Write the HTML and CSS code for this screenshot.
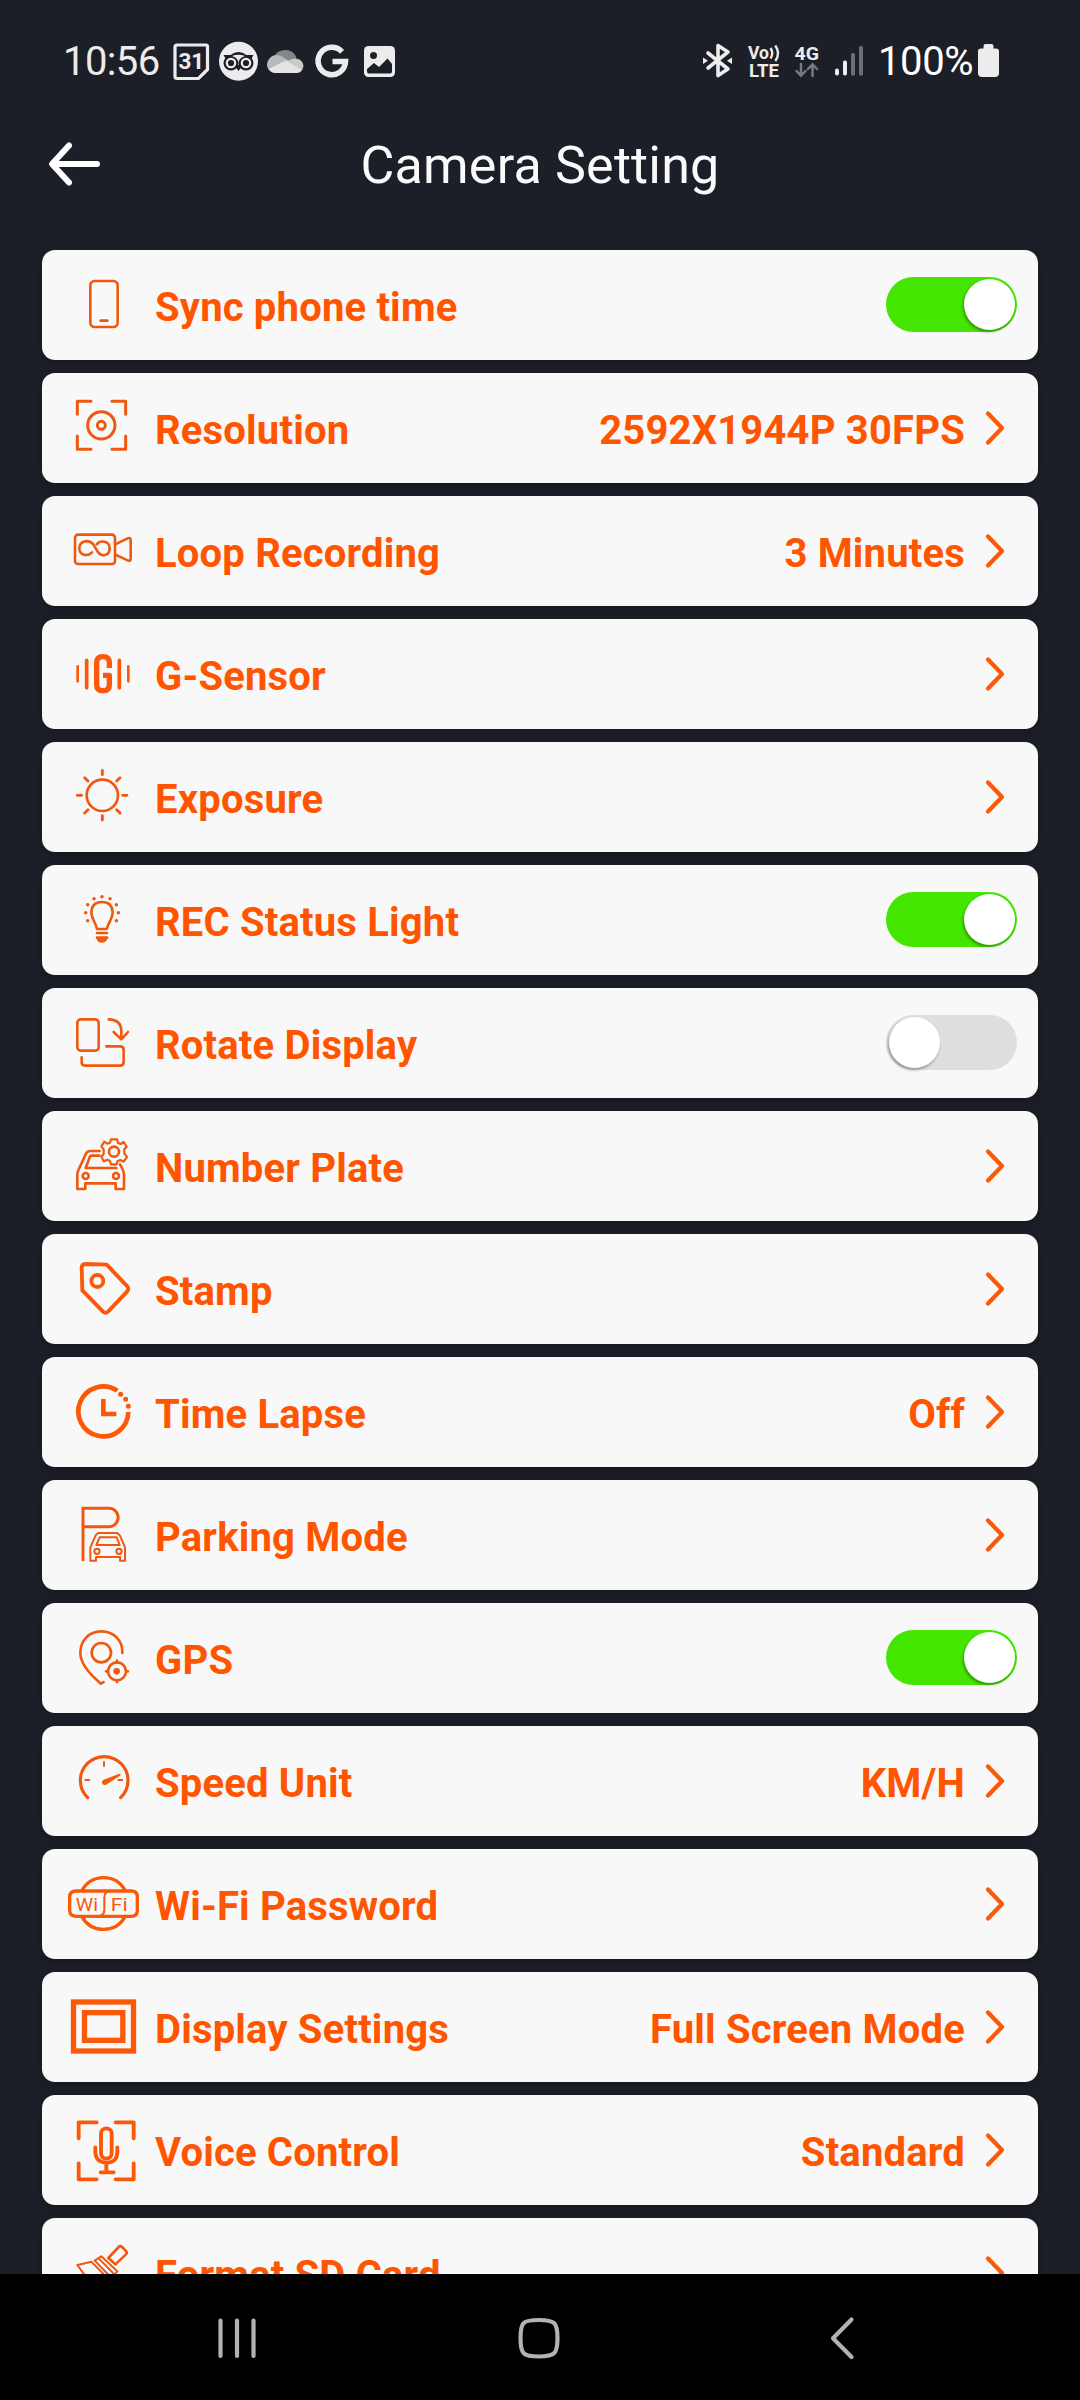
FILE: index.html
```html
<!DOCTYPE html>
<html lang="en">
<head>
<meta charset="utf-8">
<title>Camera Setting</title>
<link rel="stylesheet" href="styles.css">
</head>
<body>
<div class="screen">
  <header class="status">
    <span class="status-time">10:56</span>
    <svg class="status-icon" width="42" height="44" viewBox="172 40 42 44"><path d="M177 45h29q1.500 0 1.500 1.500V69.500L198.500 78.500H177q-2 0-2-2V47q0-2 2-2z" fill="none" stroke="#ececec" stroke-width="3.200"/><text class="glyph-31" x="191.300" y="69" text-anchor="middle">31</text></svg>
    <svg class="status-icon" width="48" height="44" viewBox="214 40 48 44"><circle cx="238.500" cy="61.300" r="19.500" fill="#ececec"/><g fill="#1d1f28"><path d="M223.500 55h7q8-6 16 0h7l-2.500 4.500h-25z"/><circle cx="231" cy="63" r="7.500"/><circle cx="246" cy="63" r="7.500"/><path d="M234 65h9l-4.500 6z"/></g><path d="M232 56q6.500-2.500 13 0q-5 1.500-6.500 5.500q-1.500-4-6.500-5.500z" fill="#ececec"/><g fill="none" stroke="#ececec" stroke-width="2.200"><circle cx="231" cy="63" r="4.200"/><circle cx="246" cy="63" r="4.200"/></g></svg>
    <svg class="status-icon" width="48" height="44" viewBox="262 40 48 44"><path d="M274 57q3-7 11.500-7q8 0 11 8l-10 7z" fill="#85868a"/><path d="M269 70q-4-5 0-11q3-4 8-4q3 0 5 1.500l9 5.500z" fill="#b9babd"/><path d="M286 62q6-4 10-3.500q7 1 7.500 7.500l-1.500 4.500z" fill="#c9cacc"/><path d="M268.500 69L286 60.500l16 9.500q-1.500 3-5.500 3H275q-4 0-6.500-4z" fill="#e4e4e6"/></svg>
    <svg class="status-icon" width="46" height="44" viewBox="310 40 46 44"><path d="M342 51.800A13.700 13.700 0 1 0 345.500 61.500H332.500" fill="none" stroke="#ececec" stroke-width="5.600"/></svg>
    <svg class="status-icon" width="44" height="44" viewBox="356 40 44 44"><rect x="364" y="46" width="31" height="31" rx="4.500" fill="#ececec"/><circle cx="373.500" cy="55.500" r="3.500" fill="#1d1f28"/><path d="M367 69l7-6 5 4 8.500-8.500L392 64v7.500q0 2-2 2H369q-2 0-2-2z" fill="#1d1f28"/></svg>
    <span class="spacer"></span>
    <svg class="status-icon" width="42" height="44" viewBox="698 40 42 44"><g fill="none" stroke="#ececec" stroke-width="3.600" stroke-linejoin="round" stroke-linecap="round"><path d="M708 53l20 16-10 6.500V45.500L728 52l-20 16"/></g><path d="M703 57.500l5 3.200-5 3.200zM732 57.500l-5 3.200 5 3.200z" fill="#ececec"/></svg>
    <svg class="status-icon" width="48" height="44" viewBox="740 40 48 44"><text class="glyph-net" x="748" y="59" textLength="21" lengthAdjust="spacingAndGlyphs">Vo</text><text class="glyph-net" x="749" y="76.500" textLength="30" lengthAdjust="spacingAndGlyphs">LTE</text><path d="M770.500 48q3.500 5 0 10.500M775.300 45.500q5.500 8 0 15.500" fill="none" stroke="#ececec" stroke-width="2.400"/></svg>
    <svg class="status-icon" width="38" height="44" viewBox="788 40 38 44"><text class="glyph-net" x="794.500" y="60" textLength="24.500" lengthAdjust="spacingAndGlyphs">4G</text><path d="M801 64v11M796.500 71l4.500 4.700 4.500-4.700M812.500 76V65M808 69l4.500-4.700L817 69" fill="none" stroke="#77797f" stroke-width="2.500" stroke-linecap="round"/></svg>
    <svg class="status-icon" width="46" height="44" viewBox="826 40 46 44"><rect x="835" y="68.500" width="4" height="7" rx="2" fill="#ececec"/><rect x="843" y="60.500" width="4" height="15" rx="1.800" fill="#ececec"/><rect x="851" y="53" width="4" height="22.500" rx="1.500" fill="#6d6f75"/><rect x="859" y="46" width="4" height="29.500" rx="1.500" fill="#6d6f75"/></svg>
    <span class="status-percent">100%</span>
    <svg class="status-icon" width="28" height="44" viewBox="975 40 28 44"><path d="M985.500 44h6q2 0 2 2v2.500h2.500q3 0 3 3V73q0 4-4 4H982q-4 0-4-4V51.500q0-3 3-3h2.500V46q0-2 2-2z" fill="#ececec"/></svg>
  </header>

  <div class="titlebar">
    <svg class="back" width="60" height="50" viewBox="44 139 60 50"><path d="M69 145.500L52 164l17 18.500M53 164H97" fill="none" stroke="#fff" stroke-width="6" stroke-linecap="round" stroke-linejoin="round"/></svg>
    <h1 class="title">Camera Setting</h1>
  </div>

  <main class="list">
    <div class="row">
      <svg class="icon" viewBox="96 30 240 330"><g class="line"><rect x="181" y="123" width="82" height="138" rx="13"/><path d="M212 242H232" stroke-width="8"/></g></svg>
      <span class="label">Sync phone time</span>
      <span class="toggle on"></span>
    </div>
    <div class="row">
      <svg class="icon" viewBox="96 399 240 330"><g class="line wide"><path d="M142 523V484H183M246 484H287V523M142 588V628H183M246 628H287V588"/><circle cx="214" cy="556" r="41"/><circle cx="214" cy="556" r="12"/></g></svg>
      <span class="label">Resolution</span><span class="value">2592X1944P 30FPS</span>
      <svg class="chevron" viewBox="0 0 24 40"><path d="M5 5.500L19 20 5 34.500"/></svg>
    </div>
    <div class="row">
      <svg class="icon" viewBox="96 768 240 330"><g class="line"><rect x="135" y="884" width="120" height="88" rx="9"/><path d="M256 913L291 896Q302 891 302 900V956Q302 965 293 961L256 944"/><path d="M186 937C174 950 148 948 148 925S176 897 190 913L203 935C215 952 239 948 239 925S212 899 200 913"/></g></svg>
      <span class="label">Loop Recording</span><span class="value">3 Minutes</span>
      <svg class="chevron" viewBox="0 0 24 40"><path d="M5 5.500L19 20 5 34.500"/></svg>
    </div>
    <div class="row">
      <svg class="icon" viewBox="96 27 240 330"><g class="line solid"><path d="M143 169V214M295 169V214" stroke-width="8"/><path d="M170 151V233M268 151V233" stroke-width="11"/><path d="M238 174V158Q238 140 219 140T200 158V224Q200 242 219 242T238 224V196H219" stroke-width="16" stroke-linecap="butt"/></g></svg>
      <span class="label">G-Sensor</span>
      <svg class="chevron" viewBox="0 0 24 40"><path d="M5 5.500L19 20 5 34.500"/></svg>
    </div>
    <div class="row">
      <svg class="icon" viewBox="96 396 240 330"><g class="line"><circle cx="217" cy="556" r="47"/><path d="M217 481V494M217 617V630M142 556H155M278 556H291M164 503L174 513M260 599L270 609M164 609L174 599M260 513L270 503" stroke-width="8.500"/></g></svg>
      <span class="label">Exposure</span>
      <svg class="chevron" viewBox="0 0 24 40"><path d="M5 5.500L19 20 5 34.500"/></svg>
    </div>
    <div class="row">
      <svg class="icon" viewBox="96 765 240 330"><g class="line"><path d="M201 957C197 937 184 926 184 906Q186 876 216 876T248 906C248 926 235 937 230 957Z"/><path d="M201 969H231M201 983H231"/></g><path class="fill" d="M200 986H232Q229 997 216 998T200 986z"/><path class="line" d="M215.900 860H216M191.900 866H192M240 866H240.100M173 884H173.100M259 884H259.100M167 908H167.100M265 908H265.100M173 932H173.100M259 932H259.100" style="stroke-width:10.500"/></svg>
      <span class="label">REC Status Light</span>
      <span class="toggle on"></span>
    </div>
    <div class="row">
      <svg class="icon" viewBox="96 24 240 330"><g class="line"><rect x="142" y="118" width="64" height="94" rx="10"/><path d="M229 199H270Q281 199 281 210V246Q281 257 270 257H165Q155 257 155 247V232"/><path d="M236 118Q274 119 274 154V176M251 156L274 178 294 156"/></g></svg>
      <span class="label">Rotate Display</span>
      <span class="toggle"></span>
    </div>
    <div class="row">
      <svg class="icon" viewBox="96 393 240 330"><g class="line"><path d="M209 513H181Q171 513 168 521L144 573Q142 577 142 585V627H166V610H257V627H282V585Q282 573 270 553"/><path d="M208 527H186Q181 527 179 532L167 564H259"/><circle cx="167" cy="588" r="9"/><circle cx="258" cy="588" r="9"/><circle cx="252" cy="515" r="15"/><path d="M243 478H261L264 489 272 492 281 486 290 500 283 508V521L291 531 281 545 271 540 262 544 260 553H243L240 543 232 539 222 544 214 531 221 522V508L214 499 223 485 232 491 240 488Z" stroke-width="6.500"/></g></svg>
      <span class="label">Number Plate</span>
      <svg class="chevron" viewBox="0 0 24 40"><path d="M5 5.500L19 20 5 34.500"/></svg>
    </div>
    <div class="row">
      <svg class="icon" viewBox="96 762 240 330"><g class="line solid medium"><path d="M166 852L230 854 292 919Q298 927 291 935L234 995Q227 1002 219 995L157 931 155 862Q156 853 166 852Z"/><circle cx="202" cy="903" r="18"/></g></svg>
      <span class="label">Stamp</span>
      <svg class="chevron" viewBox="0 0 24 40"><path d="M5 5.500L19 20 5 34.500"/></svg>
    </div>
    <div class="row">
      <svg class="icon" viewBox="96 21 240 330"><g class="line solid"><path d="M262 122A75 75 0 1 0 295 186" stroke-width="14" stroke-linecap="butt"/><path d="M220 147V192H259" stroke-width="14" stroke-linecap="butt" stroke-linejoin="miter"/><path d="M272 133H272.100M287 148H287.100M295 169H295.100" stroke-width="15"/></g></svg>
      <span class="label">Time Lapse</span><span class="value">Off</span>
      <svg class="chevron" viewBox="0 0 24 40"><path d="M5 5.500L19 20 5 34.500"/></svg>
    </div>
    <div class="row">
      <svg class="icon" viewBox="96 390 240 330"><g class="line"><path d="M159 633V475H237A27 27 0 0 1 237 530H163" stroke-linecap="butt" stroke-linejoin="miter" stroke-width="9"/><path d="M205 549H262L270 557 285 592V632H270V621H198V632H181V592L197 556ZM209 562H260L269 585H199Z" stroke-width="6"/><circle cx="201" cy="604" r="8" stroke-width="6"/><circle cx="267" cy="604" r="8" stroke-width="6"/></g></svg>
      <span class="label">Parking Mode</span>
      <svg class="chevron" viewBox="0 0 24 40"><path d="M5 5.500L19 20 5 34.500"/></svg>
    </div>
    <div class="row">
      <svg class="icon" viewBox="96 759 240 330"><g class="line"><path d="M277 909C279 872 252 844 214 844S151 872 151 909C151 942 183 976 213 1001L221 996"/><circle cx="214" cy="908" r="29"/><circle cx="261" cy="964" r="27"/><path d="M261 932V938M261 991V996M228 964H234M288 964H294"/></g><circle class="fill" cx="260" cy="964" r="10"/></svg>
      <span class="label">GPS</span>
      <span class="toggle on"></span>
    </div>
    <div class="row">
      <svg class="icon" viewBox="96 48 240 330"><g class="line"><path d="M173 263A71.500 71.500 0 1 1 272 263" stroke-width="9.500"/><path d="M222 154V170M164 210H180M263 210H279" stroke-width="6" stroke-linecap="butt"/></g><path class="fill" d="M271 191Q273 195 269 198L228 224Q219 228 216 219Q215 212 221 209L268 191z"/></svg>
      <span class="label">Speed Unit</span><span class="value">KM/H</span>
      <svg class="chevron" viewBox="0 0 24 40"><path d="M5 5.500L19 20 5 34.500"/></svg>
    </div>
    <div class="row">
      <svg class="icon" viewBox="96 417 240 330"><g class="line solid"><path d="M155 543Q177 503 221 503T286 543M155 619Q177 658 221 658T286 619M139 543H304Q322 543 322 561V601Q322 619 304 619H139Q119 619 119 601V561Q119 543 139 543Z"/><path d="M240 544Q223 546 223 562V600Q223 616 206 618" stroke-width="6"/></g><text class="glyph-wifi" x="137" y="602" textLength="67" lengthAdjust="spacingAndGlyphs">Wi</text><text class="glyph-wifi" x="242" y="602" textLength="51" lengthAdjust="spacingAndGlyphs">Fi</text></svg>
      <span class="label">Wi-Fi Password</span>
      <svg class="chevron" viewBox="0 0 24 40"><path d="M5 5.500L19 20 5 34.500"/></svg>
    </div>
    <div class="row">
      <svg class="icon" viewBox="96 786 240 330"><g class="line solid frame"><rect x="130.500" y="876" width="180" height="147"/><rect x="163.500" y="908" width="115" height="83"/></g></svg>
      <span class="label">Display Settings</span><span class="value">Full Screen Mode</span>
      <svg class="chevron" viewBox="0 0 24 40"><path d="M5 5.500L19 20 5 34.500"/></svg>
    </div>
    <div class="row">
      <svg class="icon" viewBox="96 45 240 330"><g class="line solid medium"><path d="M146 175V127H200M257 127H311V175M146 250V298H200M257 298H311V250"/><rect x="213" y="145" width="32" height="91" rx="16"/><path d="M196 202V216Q197 247 229 248T262 216V202M229 250V277M212 277H251"/></g></svg>
      <span class="label">Voice Control</span><span class="value">Standard</span>
      <svg class="chevron" viewBox="0 0 24 40"><path d="M5 5.500L19 20 5 34.500"/></svg>
    </div>
    <div class="row">
      <svg class="icon" viewBox="96 414 240 330"><g class="line"><path d="M235 534L266 501Q271 496 276 501L287 512Q293 517 288 523L256 553Z"/><path d="M194 542L214 529 262 574 245 594ZM207 536L252 582M142 555Q162 551 184 545L238 600M142 555L175 600" stroke-width="6"/></g></svg>
      <span class="label">Format SD Card</span>
      <svg class="chevron" viewBox="0 0 24 40"><path d="M5 5.500L19 20 5 34.500"/></svg>
    </div>
  </main>

  <nav class="navbar">
    <svg width="1080" height="126" viewBox="0 0 1080 126" fill="none" stroke="#b2b2b2" stroke-width="4.200" stroke-linecap="round" stroke-linejoin="round"><path d="M220.500 46.500V82M237 46.500V82M253.500 46.500V82"/><path d="M539 46C555 46 557.500 48.500 557.500 64S555 82.500 539 82.500 520.500 80 520.500 64 523 46 539 46Z"/><path d="M851.500 45.500L833 64.200 851.500 83"/></svg>
  </nav>
</div>
</body>
</html>
```
FILE: styles.css
```css
* { box-sizing: border-box; }

body {
  margin: 0;
  background: #1d1f28;
  font-family: Roboto, "Noto Sans", sans-serif;
}

.screen {
  display: flex;
  flex-direction: column;
  width: 1080px;
  height: 2400px;
  overflow: hidden;
}

.status {
  display: flex;
  align-items: center;
  flex: none;
  height: 84px;
  padding: 40px 77px 0 63px;
  color: #f4f4f4;
  font-size: 40px;
  line-height: 44px;
  white-space: nowrap;
}
.status-icon { display: block; flex: none; }
.status-time { width: 109px; letter-spacing: -0.6px; color: #ececec; }
.status-percent { width: 103px; padding-left: 6px; letter-spacing: -0.4px; color: #fff; }
.spacer { flex: 1; }

.glyph-31 { font: 700 22.5px Roboto, sans-serif; fill: #ececec; }
.glyph-net { font: 700 19px Roboto, sans-serif; fill: #ececec; }
.glyph-wifi { font: 400 57px Roboto, sans-serif; fill: #f95a10; }

.titlebar {
  display: grid;
  grid-template-columns: 60px 1fr 60px;
  align-items: center;
  flex: none;
  height: 166px;
  padding: 0 44px 6px;
}
.title {
  margin: 0;
  padding-top: 3px;
  color: #fafafa;
  font-size: 52px;
  font-weight: 400;
  letter-spacing: 0.2px;
  line-height: 60px;
  text-align: center;
}

.list {
  display: flex;
  flex-direction: column;
  gap: 13px;
  flex: 1;
  min-height: 0;
  padding: 0 42px;
  overflow: hidden;
}
.row {
  display: flex;
  align-items: center;
  flex: none;
  height: 110px;
  padding: 0 21px 0 20px;
  border-radius: 13px;
  background: #f8f8f8;
  box-shadow: 0 3px 9px rgba(0, 0, 0, 0.25);
  color: #ff5500;
  font-size: 40px;
  font-weight: 700;
  letter-spacing: 0.18px;
  line-height: 48px;
  white-space: nowrap;
}
.icon { flex: none; width: 80px; height: 110px; }
.label { flex: 1; padding: 6px 0 0 13px; }
.value { padding: 6px 18px 0 0; }

.line {
  fill: none;
  stroke: #f0580f;
  stroke-width: 7.8;
  stroke-linecap: round;
  stroke-linejoin: round;
}
.line.wide { stroke-width: 9; }
.line.solid { stroke: #fb5808; stroke-width: 10; }
.line.medium { stroke-width: 11.5; }
.line.frame { stroke-width: 16; stroke-linejoin: miter; }
.fill { fill: #f55a0c; }

.chevron {
  flex: none;
  width: 24px;
  height: 40px;
  margin-right: 10px;
  fill: none;
  stroke: #fb5808;
  stroke-width: 4.2;
  stroke-linecap: round;
  stroke-linejoin: round;
}

.toggle {
  display: flex;
  flex: none;
  width: 131px;
  height: 55px;
  margin-bottom: 1px;
  padding: 2px 2.5px;
  border-radius: 28px;
  background: #dedede;
}
.toggle::before {
  content: "";
  width: 51px;
  height: 51px;
  border-radius: 50%;
  background: #fff;
  box-shadow: -1px 2px 3px rgba(0, 0, 0, 0.35);
}
.toggle.on { justify-content: flex-end; background: #44e500; }

.navbar { flex: none; height: 126px; background: #000; }
.navbar svg { display: block; }
```
